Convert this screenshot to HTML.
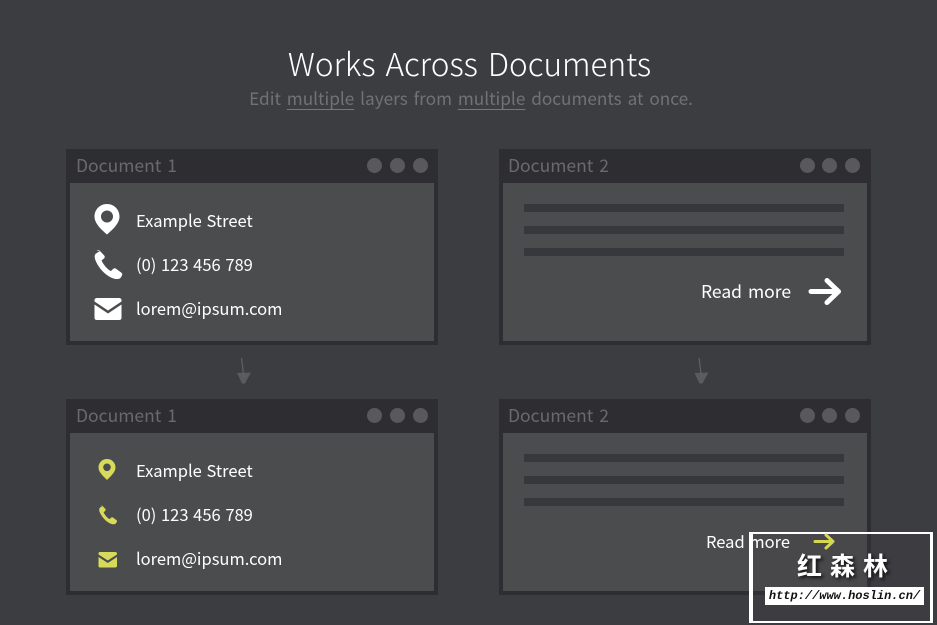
<!DOCTYPE html>
<html><head><meta charset="utf-8"><style>
html,body{margin:0;padding:0}
body{width:937px;height:625px;overflow:hidden;background:#3c3d41;position:relative;font-family:"Noto Sans CJK KR","Liberation Sans",sans-serif;}
.a{position:absolute}
.t{position:absolute;white-space:nowrap;line-height:24px;height:24px}
.w{color:#fff;font-size:16.5px;font-weight:400;word-spacing:1px}
.p{position:absolute;width:372.500px;height:196.500px;background:#2e2e32}
.c{position:absolute;left:4.500px;top:34.500px;width:364px;height:158px;background:#4b4c4e}
.d{position:absolute;top:9.500px;width:15px;height:15px;border-radius:50%;background:#59595c}
.h{position:absolute;left:10.500px;top:4px;font-size:17.5px;line-height:25px;color:#6a6a6d;white-space:nowrap;word-spacing:2px}
.l{position:absolute;width:320px;height:8px;background:#37383b}
u{text-decoration:underline 1px #77777a;text-underline-offset:4px;text-decoration-skip-ink:none}
svg{position:absolute;overflow:visible}
</style></head><body>
<div class="t" style="left:0;width:939px;text-align:center;top:44px;height:38px;line-height:38px;font-size:31.500px;color:#fff;word-spacing:3px;font-weight:300">Works Across Documents</div>
<div class="t" style="left:0;width:942px;text-align:center;top:86px;font-size:17.2px;color:#727276;word-spacing:2px"><div style="display:inline-block">Edit <u>multiple</u> layers from <u>multiple</u> documents at once.</div></div>

<div class="p" style="left:65.500px;top:148.500px"><div class="h">Document 1</div><div class="d" style="left:301px"></div><div class="d" style="left:324px"></div><div class="d" style="left:347px"></div><div class="c"></div></div>
<div class="p" style="left:498.500px;top:148.500px"><div class="h" style="left:9.500px">Document 2</div><div class="d" style="left:301px"></div><div class="d" style="left:323px"></div><div class="d" style="left:346px"></div><div class="c"><div class="l" style="left:21px;top:21px"></div><div class="l" style="left:21px;top:43px"></div><div class="l" style="left:21px;top:65px"></div></div></div>
<div class="p" style="left:65.500px;top:398.500px"><div class="h">Document 1</div><div class="d" style="left:301px"></div><div class="d" style="left:324px"></div><div class="d" style="left:347px"></div><div class="c"></div></div>
<div class="p" style="left:498.500px;top:398.500px"><div class="h" style="left:9.500px">Document 2</div><div class="d" style="left:301px"></div><div class="d" style="left:323px"></div><div class="d" style="left:346px"></div><div class="c"><div class="l" style="left:21px;top:21px"></div><div class="l" style="left:21px;top:43px"></div><div class="l" style="left:21px;top:65px"></div></div></div>

<div class="t w" style="left:136px;top:208px">Example Street</div>
<div class="t w" style="left:136px;top:252px">(0) 123 456 789</div>
<div class="t w" style="left:136px;top:296px">lorem@ipsum.com</div>
<div class="t w" style="left:136px;top:458px">Example Street</div>
<div class="t w" style="left:136px;top:502px">(0) 123 456 789</div>
<div class="t w" style="left:136px;top:546px">lorem@ipsum.com</div>

<div class="a" style="left:748.500px;top:532px;width:184px;height:91px;background:rgba(60,60,65,.2);border:solid #fff;border-width:2.500px 3px 2px 4px;box-sizing:border-box"></div>

<svg style="left:0;top:0" width="937" height="625">
<path fill-rule="evenodd" fill="#fff" d="M107 204c-7 0-12.500 5.500-12.500 12.500 0 7.500 8 14 12.500 18 4.500-4 12.500-10.500 12.500-18C119.500 209.500 114 204 107 204zM107 210.500a6 6 0 1 1 0 12a6 6 0 0 1 0-12z"/>
<path fill="#fff" d="M100 251l-4 2.500c-2 1.500-1.500 5 0 8 3 7 9 13 15 16 3 1.500 7 2.500 9.500.5l1.500-2.500c.5-1 .3-2-.5-2.800l-5.500-4c-1-.7-2-.5-3 .3l-2 2c-3-1-7.500-6-9.500-10.500l2.500-2c.8-.8 1-1.800.4-2.800l-4.500-4.800c-1-.8-2-.6-3.400.1z"/>
<path fill="#fff" d="M97 298h22c1.500 0 2.500 1 2.500 2v1.500L108 310.500 94.500 301.500V300c0-1 1-2 2.500-2zM94.500 304.500l13.500 9 13.500-9V318c0 1.200-1 2-2.500 2H97c-1.500 0-2.500-.8-2.500-2z"/>
<path fill-rule="evenodd" fill="#d8da5a" d="M107 459c-4.900 0-8.500 3.700-8.500 8.500 0 5 5.500 9.300 8.500 12.500 3-3.200 8.500-7.500 8.500-12.500C115.500 462.700 111.900 459 107 459zM107 463.500a3.800 3.800 0 1 1 0 7.600a3.800 3.800 0 0 1 0-7.600z"/>
<path fill="#d8da5a" d="M102.500 506l-2.500 1.600c-1.200 1-1 3.200 0 5.200 2 4.600 5.800 8.400 9.700 10.400 2 1 4.500 1.600 6.100.3l1-1.600c.3-.7.2-1.300-.3-1.800l-3.600-2.600c-.6-.5-1.300-.3-1.900.2l-1.300 1.300c-2-.6-4.900-3.900-6.100-6.800l1.600-1.300c.5-.5.6-1.200.3-1.800l-2.900-3.100c-.6-.5-1.300-.4-2.100.0z"/>
<path fill="#d8da5a" d="M100 552h15c1 0 2 .6 2 1.500v1L107.800 560.500 98.500 554.500v-1c0-.9.500-1.500 1.500-1.500zM98.500 557l9.300 6 9.200-6v9c0 .8-.7 1.500-2 1.500H100c-1 0-1.500-.7-1.500-1.500z"/>
<path fill="none" stroke="#fff" stroke-width="5" stroke-linecap="round" stroke-linejoin="round" d="M811 291.500h27.500M827 280.500l11.500 11-11.500 11"/>
<path fill="none" stroke="#d5d750" stroke-width="3" stroke-linecap="round" stroke-linejoin="round" d="M815 541.500h18M826 535l7 6.500-7 6.500"/>
<g stroke="#5f6064" fill="#5f6064"><path fill="none" stroke-width="1.200" d="M241.500 358l2.500 20"/><path stroke="none" d="M237 373l14-.5-6 11-3 0z" opacity=".85"/><path fill="none" stroke-width="1.200" d="M699 358l2.500 20"/><path stroke="none" d="M694.500 373l14-.5-6 11-3 0z" opacity=".85"/></g>
</svg>

<div class="t w" style="left:701px;top:280px;font-size:17.5px;word-spacing:2px">Read more</div>
<div class="t w" style="left:706px;top:529px">Read more</div>

<div class="t" style="left:797px;top:550px;font-size:25px;line-height:30px;height:30px;color:#fff;font-weight:700;font-family:'Noto Sans CJK SC',sans-serif;letter-spacing:8px;text-shadow:2px 2px 3px #111">红森林</div>
<div class="t" style="left:765px;top:587px;width:159px;height:18px;background:#fff;color:#111;font:italic 700 12px/18px 'Liberation Mono',monospace;text-align:center">http://www.hoslin.cn/</div>
</body></html>
